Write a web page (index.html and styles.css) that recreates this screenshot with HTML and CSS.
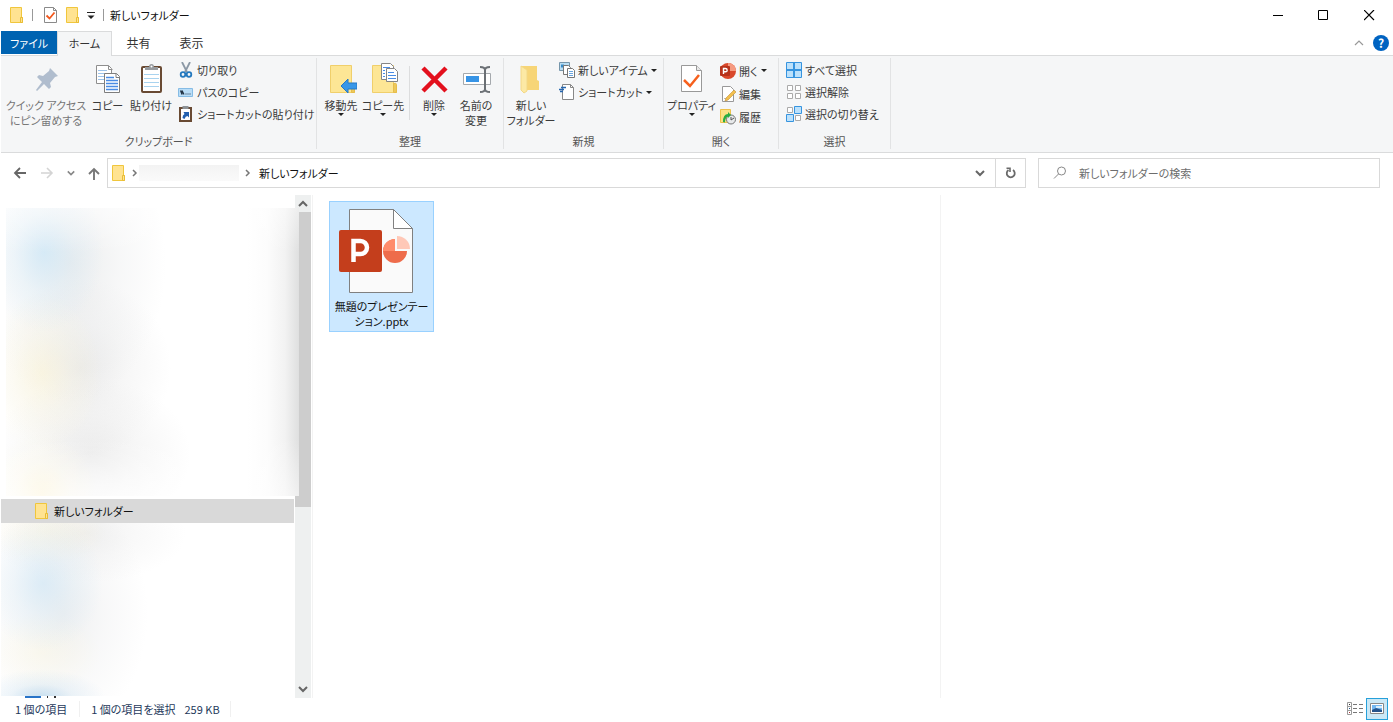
FILE: index.html
```html
<!DOCTYPE html>
<html lang="ja">
<head>
<meta charset="utf-8">
<title>新しいフォルダー</title>
<link rel="stylesheet" href="styles.css">
</head>
<body>
<svg class="defs" aria-hidden="true">
  <symbol id="folder" viewBox="0 0 14 16">
    <path d="M.5.5h11v10h1v5H.5z" fill="#ffe391" stroke="#f0c63c"/>
    <path d="M10.500 15V10.500h2v5h-2z" fill="#ffe391" stroke="#e9bd35"/>
  </symbol>
  <symbol id="bigfolder" viewBox="0 0 26 30">
    <path d="M.5.5h21v20h3v7H.5z" fill="#fde695" stroke="#f0cf6b"/>
    <path d="M21.500 27.500v-9q3-1 3 1v8z" fill="#edc85a" stroke="#e6bd4a"/>
  </symbol>
  <symbol id="down" viewBox="0 0 10 10"><path d="M1 3l4 4 4-4" fill="none" stroke="currentColor" stroke-width="2"/></symbol>
  <symbol id="crumb" viewBox="0 0 6 8"><path d="M1 1l3 3-3 3" fill="none" stroke="#777" stroke-width="1.500"/></symbol>
</svg>
<div class="window">
  <header class="titlebar">
    <svg class="i-folder"><use href="#folder"/></svg>
    <span class="rule"></span>
    <button class="plain quick" aria-label="プロパティ"><svg width="13" height="16" viewBox="0 0 13 16"><path d="M.5.5h9l3 3v12H.5z" fill="#fff" stroke="#8a8a8a"/><path d="M9.500.5v3h3" fill="none" stroke="#8a8a8a"/><path d="M2.500 8.500l3 3 5-6" fill="none" stroke="#f2571c" stroke-width="1.800"/></svg></button>
    <button class="plain quick" aria-label="新しいフォルダー"><svg class="i-folder"><use href="#folder"/></svg></button>
    <button class="plain quick" aria-label="カスタマイズ"><svg width="8" height="8" viewBox="0 0 8 8"><path d="M0 1.500h8" stroke="#222"/><path d="M.5 4.500h7L4 8z" fill="#222"/></svg></button>
    <span class="rule last"></span>
    <h1 class="title">新しいフォルダー</h1>
    <div class="controls">
      <button class="plain" aria-label="最小化"><svg width="11" height="11"><path d="M1 5.500h10" stroke="#000"/></svg></button>
      <button class="plain" aria-label="最大化"><svg width="11" height="11"><path d="M.5.5h9v9h-9z" fill="none" stroke="#000"/></svg></button>
      <button class="plain" aria-label="閉じる"><svg width="11" height="11"><path d="M0 0l10 10M10 0L0 10" stroke="#000" stroke-width="1.200"/></svg></button>
    </div>
  </header>
  <nav class="tabs">
    <button class="tab file">ファイル</button>
    <button class="tab active">ホーム</button>
    <button class="tab wide">共有</button>
    <button class="tab wide">表示</button>
    <div class="tabtools">
      <button class="plain" aria-label="リボンの最小化"><svg width="10" height="6" viewBox="0 0 10 6"><path d="M1 5l4-4 4 4" fill="none" stroke="#999" stroke-width="1.200"/></svg></button>
      <button class="plain help" aria-label="ヘルプ">?</button>
    </div>
  </nav>
  <section class="ribbon">
    <div class="group g-clip">
      <div class="tools">
        <button class="large w-pin off"><svg width="32" height="32" viewBox="0 0 32 32"><path d="M20 5l8 8-3 1-5 6 1 4-2 2-5-5-7 7-1-1 6-8-5-5 2-2 4 1 6-5z" fill="#b0bdce"/></svg><span>クイック アクセス<br>にピン留めする</span></button>
        <button class="large w-copy"><svg width="32" height="32" viewBox="0 0 32 32"><g fill="#fff" stroke="#8e8e8e"><path d="M4.500 2.500h12l3 3v15h-15z"/><path d="M16.500 2.500v4h4" fill="none"/></g><path d="M6 7.500h9M6 10.500h7M6 13.500h7M6 16.500h7" stroke="#9cc3ea"/><g fill="#fff" stroke="#7d7d7d"><path d="M12.500 10.500h12l3 3v16h-15z"/><path d="M24 10.500v4h4" fill="none"/></g><path d="M14 14.500h8M14 17.500h12M14 20.500h12M14 23.500h12M14 26.500h12" stroke="#4a8ce4" stroke-width="1.300"/></svg><span>コピー</span></button>
        <button class="large w-paste"><svg width="32" height="32" viewBox="0 0 32 32"><rect x="7" y="4" width="19" height="25" rx="1" fill="#fff" stroke="#694a33" stroke-width="2"/><path d="M9 11.500h15M9 15.500h15M9 19.500h15M9 23.500h15" stroke="#a9d3ef"/><path d="M10 7V4h4q0-3 2.500-3T19 4h4v3z" fill="#969a9e"/><circle cx="16.500" cy="3.500" r="1" fill="#fff"/></svg><span>貼り付け</span></button>
        <div class="stack">
          <button class="small"><svg width="16" height="16" viewBox="0 0 16 16"><path d="M4 0l5 10M12 0L7 10" stroke="#8b98a5" stroke-width="1.800"/><circle cx="5" cy="12.500" r="2.300" fill="none" stroke="#2378be" stroke-width="1.800"/><circle cx="11" cy="12.500" r="2.300" fill="none" stroke="#2378be" stroke-width="1.800"/></svg>切り取り</button>
          <button class="small"><svg width="16" height="16" viewBox="0 0 16 16"><path d="M.5 4.500h14v8H.5z" fill="#b9ddf7" stroke="#86bce5"/><path d="M2.500 6.500l1.500 4V6.500l2 4M7.500 10h1M9.500 10h1M11.500 10h1" fill="none" stroke="#234" stroke-width="1.200"/></svg>パスのコピー</button>
          <button class="small"><svg width="16" height="16" viewBox="0 0 16 16"><path d="M2 2h11v13H2z" fill="#fff" stroke="#694a33" stroke-width="2"/><path d="M4.500 0h6v3h-6z" fill="#8d9296"/><path d="M4.500 12q0-3 2-4L5.500 6H11v5.500L9.500 10q-2 0-3 3z" fill="#235fae"/></svg>ショートカットの貼り付け</button>
        </div>
      </div>
      <div class="caption">クリップボード</div>
    </div>
    <div class="group g-org">
      <div class="tools">
        <button class="large w-move"><svg width="32" height="32" viewBox="0 0 32 32"><use href="#bigfolder" x="5" y="2" width="26" height="30"/><path d="M16 23l7-7v4h9v6h-9v4z" fill="#3997e8" stroke="#2679c6"/></svg><span>移動先</span><i class="tri"></i></button>
        <button class="large w-move"><svg width="32" height="32" viewBox="0 0 32 32"><use href="#bigfolder" x="5" y="2" width="26" height="30"/><g fill="#fff" stroke="#858585"><path d="M14.500.5h9l3 3v13h-12z"/><path d="M19.500 5.500h8l3 3v10h-11z"/></g><path d="M16 4.500h7M16 7.500h2M16 10.500h2M16 13.500h2M21 9.500h6M21 12.500h8M21 15.500h8" stroke="#4a8ce4"/></svg><span>コピー先</span><i class="tri"></i></button>
        <span class="divider"></span>
        <button class="large w-move"><svg width="32" height="32" viewBox="0 0 32 32"><path d="M5 5l23 23M28 5L5 28" stroke="#e3101d" stroke-width="4.500"/></svg><span>削除</span><i class="tri"></i></button>
        <button class="large w-move"><svg width="32" height="32" viewBox="0 0 32 32"><path d="M3.500 10.500h27v11h-27z" fill="#fff" stroke="#a5a9ad"/><path d="M6 13h13v6H6z" fill="#3794e6"/><path d="M20 4q5 0 5 3v19q0 3-5 3M30 4q-5 0-5 3v19q0 3 5 3" fill="none" stroke="#6b7075" stroke-width="2"/></svg><span>名前の<br>変更</span></button>
      </div>
      <div class="caption">整理</div>
    </div>
    <div class="group g-new">
      <div class="tools">
        <button class="large w-new"><svg width="32" height="32" viewBox="0 0 32 32"><path d="M6 3h16v14l2 1v9H10z" fill="#f7d577"/><path d="M6 3l6 4v21l-3 2-3-3z" fill="#fce9a5" stroke="#f3d886"/></svg><span>新しい<br>フォルダー</span></button>
        <div class="stack">
          <button class="small"><svg width="16" height="16" viewBox="0 0 16 16"><path d="M.5.5h10v8H.5z" fill="#b9def4" stroke="#7595aa"/><path d="M2 2.500h3v3H2z" fill="#398bc7"/><path d="M4.500 3.500h5l2 2v7h-7z" fill="#fff" stroke="#777"/><path d="M8.500 6.500h5l2 2v7h-7z" fill="#fff" stroke="#777"/><path d="M10 9.500h4M10 11.500h4M10 13.500h4" stroke="#6aa5df"/></svg>新しいアイテム<i class="tri"></i></button>
          <button class="small"><svg width="16" height="16" viewBox="0 0 16 16"><path d="M3.500.5h8l3 3v12h-11z" fill="#fff" stroke="#888"/><path d="M11.500.5v3h3" fill="none" stroke="#888"/><path d="M2 3.500h5M0 5.500h5M1 7.500h3" stroke="#2767b0" stroke-width="1.300"/></svg>ショートカット<i class="tri"></i></button>
        </div>
      </div>
      <div class="caption">新規</div>
    </div>
    <div class="group g-open">
      <div class="tools">
        <button class="large w-prop"><svg width="32" height="32" viewBox="0 0 32 32"><path d="M5.500 2.500h15l5 5v21h-20z" fill="#fff" stroke="#999"/><path d="M20.500 2.500v5h5" fill="#e8e8e8" stroke="#999"/><path d="M8 17l6 6 9-11" fill="none" stroke="#f6601d" stroke-width="2.500"/></svg><span>プロパティ</span><i class="tri"></i></button>
        <div class="stack">
          <button class="small"><svg width="16" height="16" viewBox="0 0 16 16"><circle cx="8" cy="8" r="8" fill="#d9482b"/><path d="M8 0a8 8 0 0 1 8 8H8z" fill="#f59a80"/><rect y="3" width="10" height="10" rx="1" fill="#b7321b"/><path d="M3.500 11V5.500h2a1.600 1.600 0 0 1 0 3.300h-2" fill="none" stroke="#fff" stroke-width="1.400"/></svg>開く<i class="tri"></i></button>
          <button class="small"><svg width="16" height="16" viewBox="0 0 16 16"><path d="M2.500.5h8l3 3v12h-11z" fill="#fff" stroke="#999"/><path d="M4 12.500h5" stroke="#bbb"/><path d="M6 12l8-8 2 2-8 8-3 1z" fill="#f3c04e" stroke="#c1903a" stroke-width=".6"/></svg>編集</button>
          <button class="small"><svg width="16" height="16" viewBox="0 0 16 16"><path d="M.5.5h10v13H.5z" fill="#fbe185" stroke="#edc14a"/><circle cx="11" cy="10.500" r="4.500" fill="#e7e9ea" stroke="#777"/><path d="M11 8v3l3-2" fill="none" stroke="#555"/><path d="M3 13q0-8 5-8V3l3 3-3 3V7.500q-3 1-3 6z" fill="#29ad42"/></svg>履歴</button>
        </div>
      </div>
      <div class="caption">開く</div>
    </div>
    <div class="group g-sel">
      <div class="tools">
        <div class="stack">
          <button class="small"><svg width="16" height="16" viewBox="0 0 16 16"><path d="M.5.5h15v15H.5z" fill="#bce1fb" stroke="#3694df"/><path d="M8 0v16M0 8h16" stroke="#3694df" stroke-width="2"/></svg>すべて選択</button>
          <button class="small"><svg width="16" height="16" viewBox="0 0 16 16"><path d="M1.500 1.500h5v5h-5zM9.500 1.500h5v5h-5zM1.500 9.500h5v5h-5zM9.500 9.500h5v5h-5z" fill="#fff" stroke="#aaa"/></svg>選択解除</button>
          <button class="small"><svg width="16" height="16" viewBox="0 0 16 16"><path d="M1.500 1.500h5v5h-5zM9.500 9.500h5v5h-5z" fill="#fff" stroke="#aaa"/><path d="M8.500.5h7v7h-7zM.5 8.500h7v7h-7z" fill="#bce1fb" stroke="#3694df"/></svg>選択の切り替え</button>
        </div>
      </div>
      <div class="caption">選択</div>
    </div>
  </section>
  <div class="navbar">
    <div class="arrows">
      <button class="plain" aria-label="戻る"><svg width="14" height="12" viewBox="0 0 14 12"><path d="M13 6H2M7 1L2 6l5 5" fill="none" stroke="#666" stroke-width="1.800"/></svg></button>
      <button class="plain" aria-label="進む"><svg width="14" height="12" viewBox="0 0 14 12"><path d="M1 6h11M7 1l5 5-5 5" fill="none" stroke="#d4d4d4" stroke-width="1.600"/></svg></button>
      <button class="plain" aria-label="履歴"><svg class="hist"><use href="#down"/></svg></button>
      <button class="plain" aria-label="上へ"><svg width="12" height="13" viewBox="0 0 12 13"><path d="M6 13V2M1 7l5-5 5 5" fill="none" stroke="#777" stroke-width="1.900"/></svg></button>
    </div>
    <div class="address">
      <svg class="i-folder"><use href="#folder"/></svg>
      <svg class="i-crumb"><use href="#crumb"/></svg>
      <span class="masked"></span>
      <svg class="i-crumb"><use href="#crumb"/></svg>
      <span class="here">新しいフォルダー</span>
      <button class="plain drop" aria-label="以前の場所"><svg class="i-down"><use href="#down"/></svg></button>
      <button class="plain refresh" aria-label="更新"><svg width="12" height="12" viewBox="0 0 12 12"><path d="M3.500 3A4 4 0 1 0 8 3" fill="none" stroke="#6a6a6a" stroke-width="1.800"/><path d="M1.500 1.200H5V5" fill="none" stroke="#6a6a6a" stroke-width="1.600"/></svg></button>
    </div>
    <label class="search">
      <svg width="14" height="14" viewBox="0 0 14 14"><circle cx="8.500" cy="5" r="4" fill="none" stroke="#888"/><path d="M5.500 8L1 12.500" stroke="#888"/></svg>
      <input type="search" placeholder="新しいフォルダーの検索" aria-label="新しいフォルダーの検索">
    </label>
  </div>
  <main class="body">
    <aside class="side">
      <div class="tree">
        <div class="haze upper"></div>
        <a class="node" href="#"><svg class="i-folder"><use href="#folder"/></svg>新しいフォルダー</a>
        <div class="haze lower"></div>
        <div class="peek"><svg width="60" height="2"><path d="M24 0h16v2H24z" fill="#2874c8"/><path d="M46 0h1v2h-1zM53 0h2v2h-2z" fill="#333"/></svg></div>
      </div>
      <div class="scroll">
        <svg class="i-down flip"><use href="#down"/></svg>
        <div class="thumb"></div>
        <svg class="i-down"><use href="#down"/></svg>
      </div>
    </aside>
    <section class="files">
      <button class="item">
        <svg width="88" height="86" viewBox="0 0 88 86"><path d="M11.500 1.500h44l19 19v64h-63z" fill="#fafafa" stroke="#808080"/><path d="M55.500 1.500v19h19z" fill="#fff" stroke="#808080"/><path d="M57 43V31a12 12 0 1 0 12 12z" fill="#ee6c4b"/><path d="M57 43V31a12 12 0 0 0-12 12z" fill="#ff8c6b"/><path d="M59 41V28a13 13 0 0 1 13 13z" fill="#ffc8b7"/><rect x="1" y="22" width="43" height="42" rx="2" fill="#c43e1c"/><path d="M15.500 54V33h7a6 6 0 0 1 0 13h-7" fill="none" stroke="#fff" stroke-width="4.500"/></svg>
        <span>無題のプレゼンテー<br>ション.pptx</span>
      </button>
    </section>
    <section class="preview"></section>
  </main>
  <footer class="status">
    <span class="count">1 個の項目</span>
    <span class="chosen">1 個の項目を選択</span>
    <span class="size">259 KB</span>
    <div class="views">
      <button class="plain" aria-label="詳細"><svg width="16" height="14" viewBox="0 0 16 14"><path d="M.5.500h4v4h-4zM.5 4.500h4v4h-4zM.5 8.500h4v4h-4z" fill="#fff" stroke="#999"/><path d="M2 2h1v1H2z" fill="#333"/><path d="M2 6h1v1H2z" fill="#258"/><path d="M2 10h1v1H2z" fill="#a33"/><path d="M6 2.500h4M12 2.500h4M6 6.500h4M12 6.500h4M6 10.500h4M12 10.500h4" stroke="#777"/></svg></button>
      <button class="plain on" aria-label="大アイコン"><svg width="14" height="12" viewBox="0 0 14 12"><path d="M.5.5h13v10H.5z" fill="#fff" stroke="#888"/><path d="M2 2h10v7H2z" fill="#72b7f2"/><path d="M2 7l4-2 6 2v2H2z" fill="#25548c"/><path d="M6 3h6v2H6z" fill="#d8edfc"/></svg></button>
    </div>
  </footer>
</div>
</body>
</html>
```
FILE: styles.css
```css
* { box-sizing: border-box; }
body {
  margin: 0;
  background: #fff;
  color: #111;
  font: 11px/16px "Noto Sans CJK JP", sans-serif;
  font-feature-settings: "palt";
}
button, input { font: inherit; color: inherit; font-feature-settings: inherit; }
button { border: 0; padding: 0; background: none; white-space: nowrap; }
svg { display: block; flex: none; }
.defs { position: absolute; width: 0; height: 0; }
.window { min-height: 100vh; display: flex; flex-direction: column; padding-left: 1px; }
.plain { display: flex; align-items: center; justify-content: center; }
.i-folder { width: 14px; height: 16px; }
.i-down { width: 10px; height: 10px; color: #666; }
.i-crumb { width: 6px; height: 8px; }
.hist { width: 8px; height: 8px; color: #888; }
.tri { width: 0; height: 0; border: 3px solid transparent; border-top-color: #222; border-bottom: 0; }

.titlebar { height: 31px; display: flex; align-items: center; padding-left: 9px; padding-bottom: 1px; }
.rule { width: 1px; height: 12px; background: #999; margin: 0 11px 0 8px; }
.rule.last { margin: 0 6px 0 8px; }
.quick + .quick { margin-left: 9px; }
.titlebar .quick + .quick + .quick { margin-left: 7px; }
.title { margin: 0; font-size: 11px; font-weight: 400; }
.controls { display: flex; margin-left: auto; padding-right: 1px; }
.controls button { width: 46px; height: 30px; }

.tabs { height: 25px; display: flex; border-bottom: 1px solid #dadbdc; }
.tab { width: 53px; height: 23px; color: #333; }
.tab.wide { font-size: 12px; }
.tab.file { width: 56px; background: #0063b1; color: #fff; }
.tab.active { width: 55px; height: 25px; padding-bottom: 3px; background: #f5f6f7; border: 1px solid #dadbdc; border-bottom: 0; }
.tabtools { margin-left: auto; display: flex; align-items: center; gap: 9px; padding-right: 4px; }
.help { width: 16px; height: 16px; border-radius: 50%; background: #0063c1; color: #fff; font-size: 12px; font-weight: 700; }

.ribbon { display: flex; height: 97px; padding: 2px 0 3px; background: #f5f6f7; border-bottom: 1px solid #dadbdc; color: #3b3b3b; }
.group { display: flex; flex-direction: column; border-right: 1px solid #e2e3e4; }
.g-clip { width: 316px; }
.g-org { width: 187px; }
.g-new { width: 160px; }
.g-open { width: 115px; }
.g-sel { width: 112px; }
.tools { display: flex; flex: 1; }
.caption { text-align: center; color: #555; }
.large { display: flex; flex-direction: column; align-items: center; justify-content: flex-start; padding-top: 5px; line-height: 15px; }
.large span { margin-top: 3px; }
.off { color: #777; }
.w-pin { width: 90px; }
.w-copy { width: 33px; }
.w-paste { width: 54px; }
.w-move { width: 42px; }
.w-new { width: 54px; }
.w-prop { width: 55px; }
.g-org .tools { padding-left: 3px; }
.divider { width: 1px; height: 54px; margin: 8px 3px 0 5px; background: #dcddde; }
.stack { display: flex; flex-direction: column; padding-top: 1px; }
.small { display: flex; align-items: center; gap: 3px; height: 22px; }
.g-new .stack { padding-left: 1px; }
.g-open .small { height: 23px; }
.g-open .stack { padding-left: 1px; }
.g-sel .stack { padding-left: 7px; }

.navbar { display: flex; align-items: center; height: 42px; padding: 0 13px 2px 0; }
.arrows { display: flex; align-items: center; justify-content: space-between; width: 106px; padding: 0 7px 0 12px; }
.address { flex: 1; display: flex; align-items: center; height: 30px; border: 1px solid #d9d9d9; padding-left: 4px; }
.address .i-crumb { margin-left: 6px; }
.masked { width: 100px; height: 16px; background: linear-gradient(#f3f3f3, #fafafa); margin-left: 1px; }
.here { margin-left: 8px; }
.drop { margin-left: auto; width: 30px; height: 28px; }
.refresh { width: 30px; height: 28px; border-left: 1px solid #d9d9d9; }
.search { display: flex; align-items: center; gap: 12px; width: 342px; height: 30px; margin-left: 12px; padding-left: 14px; border: 1px solid #d9d9d9; }
.search input { flex: 1; min-width: 0; border: 0; outline: 0; padding: 0; background: none; }
.search input::placeholder { color: #6d6d6d; opacity: 1; }

.body { flex: 1; display: flex; }
.side { width: 312px; display: flex; padding-right: 1px; border-right: 1px solid #f3f3f3; }
.tree { flex: 1; display: flex; flex-direction: column; padding-top: 13px; }
.haze.upper {
  position: relative;
  z-index: 1;
  height: 288px;
  margin: 0 -4px 3px 5px;
  background:
    linear-gradient(rgba(255, 255, 255, .45), transparent 45px, transparent 230px, rgba(255, 255, 255, .5)),
    linear-gradient(270deg, rgba(130, 132, 132, .26), rgba(150, 150, 150, .12) 14px, rgba(180, 180, 180, .04) 32px, transparent 52px),
    radial-gradient(ellipse 60px 80px at 38px 44px, rgba(195, 228, 248, .6), rgba(205, 232, 248, .26) 50%, transparent),
    radial-gradient(ellipse 60px 80px at 36px 165px, rgba(255, 244, 200, .42), rgba(255, 247, 214, .22) 50%, transparent),
    radial-gradient(ellipse 55px 60px at 36px 285px, rgba(255, 240, 190, .5), rgba(255, 247, 214, .24) 50%, transparent),
    radial-gradient(ellipse 95px 140px at 65px 55px, rgba(205, 208, 210, .4), rgba(220, 222, 224, .24) 50%, transparent),
    radial-gradient(ellipse 90px 90px at 75px 160px, rgba(205, 205, 205, .4), rgba(215, 215, 215, .2) 50%, transparent),
    radial-gradient(ellipse 100px 75px at 85px 246px, rgba(210, 210, 210, .42), rgba(220, 220, 220, .22) 50%, transparent),
    linear-gradient(#fff, #fff);
}
.node { display: flex; align-items: center; gap: 5px; height: 24px; padding: 0 0 1px 34px; margin-right: 1px; background: #d9d9d9; color: #111; text-decoration: none; }
.haze.lower {
  height: 173px;
  background:
    radial-gradient(ellipse 60px 68px at 42px 60px, rgba(195, 226, 246, .5), rgba(205, 230, 246, .24) 50%, transparent),
    radial-gradient(ellipse 65px 30px at 40px 176px, rgba(140, 190, 224, .5), rgba(180, 212, 234, .22) 50%, transparent),
    radial-gradient(ellipse 60px 34px at 45px 8px, rgba(255, 244, 205, .3), transparent),
    radial-gradient(ellipse 60px 40px at 40px 130px, rgba(255, 247, 214, .3), transparent),
    radial-gradient(ellipse 100px 50px at 85px 10px, rgba(215, 215, 215, .36), rgba(225, 225, 225, .2) 50%, transparent),
    radial-gradient(ellipse 85px 120px at 62px 90px, rgba(212, 215, 217, .4), rgba(225, 226, 228, .24) 50%, transparent);
}
.scroll { display: flex; flex-direction: column; align-items: center; width: 16px; padding: 4px 0; background: #eef0f0; }
.flip { transform: rotate(180deg); }
.thumb { width: 16px; height: 295px; margin: 3px 0 auto; background: #cdcdcd; }
.files { flex: 1; padding: 6px 16px; }
.item { width: 105px; height: 131px; display: flex; flex-direction: column; align-items: center; justify-content: flex-start; padding-top: 6px; border: 1px solid #99d1ff; background: #cce8ff; line-height: 15px; }
.item span { margin-top: 5px; }
.preview { width: 453px; border-left: 1px solid #f3f3f3; }

.status { display: flex; align-items: center; height: 24px; padding-bottom: 2px; color: #1e395b; }
.count { padding: 0 12px 0 14px; border-right: 1px solid #f0f0f0; }
.chosen { padding-left: 11px; }
.size { padding: 0 10px 0 9px; border-right: 1px solid #f0f0f0; }
.views { display: flex; margin-left: auto; padding-right: 5px; }
.views button { width: 22px; height: 22px; }
.views .on { border: 1px solid #26a0da; background: #cbe8f6; }
```
